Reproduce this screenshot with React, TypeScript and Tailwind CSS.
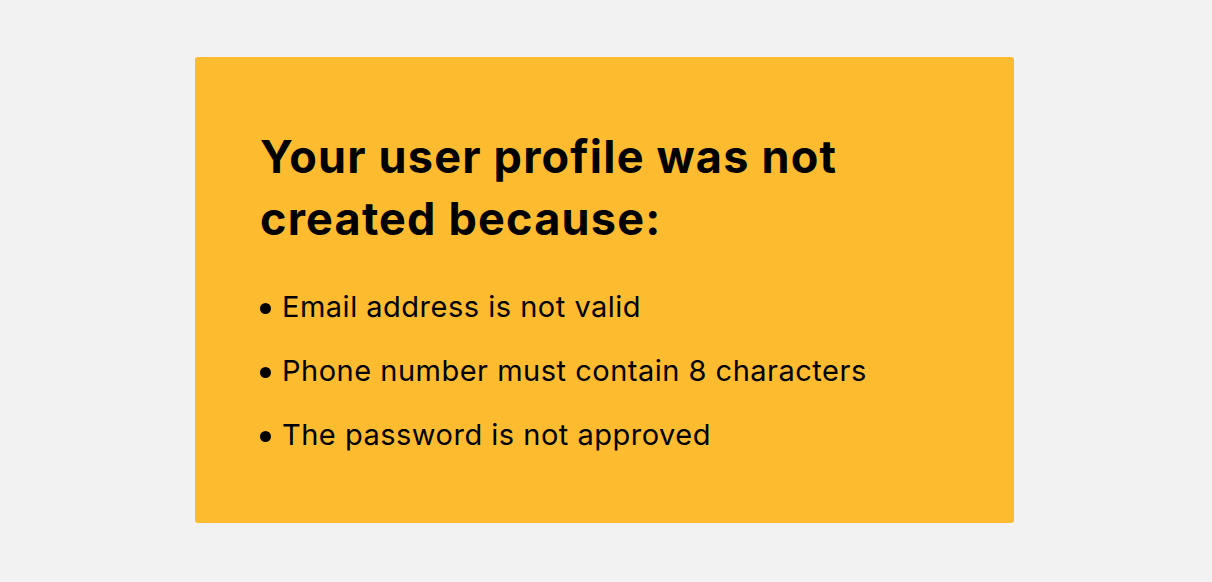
export default function App() {
  return (
    <div className="w-[1212px] h-[582px] bg-[#f2f2f2] pt-[57px] pl-[195px]" style={{ fontFamily: 'Inter, "Liberation Sans", sans-serif' }}>
      <div className="w-[819px] h-[466px] bg-[#fdbb30] rounded-[3px] pl-[65px] pt-[69px] text-black">
        <h1 className="text-[45px] leading-[62px] font-bold tracking-[1.2px] w-[640px]">
          Your user profile was not created because:
        </h1>
        <ul className="mt-[40px] flex flex-col gap-[31px] text-[29px] leading-[33px] tracking-[0.5px]">
          <li className="flex items-center gap-[11px]"><span className="w-[11px] h-[11px] rounded-full bg-black shrink-0 translate-y-[2px]" />Email address is not valid</li>
          <li className="flex items-center gap-[11px]"><span className="w-[11px] h-[11px] rounded-full bg-black shrink-0 translate-y-[2px]" />Phone number must contain 8 characters</li>
          <li className="flex items-center gap-[11px]"><span className="w-[11px] h-[11px] rounded-full bg-black shrink-0 translate-y-[2px]" />The password is not approved</li>
        </ul>
      </div>
    </div>
  );
}
